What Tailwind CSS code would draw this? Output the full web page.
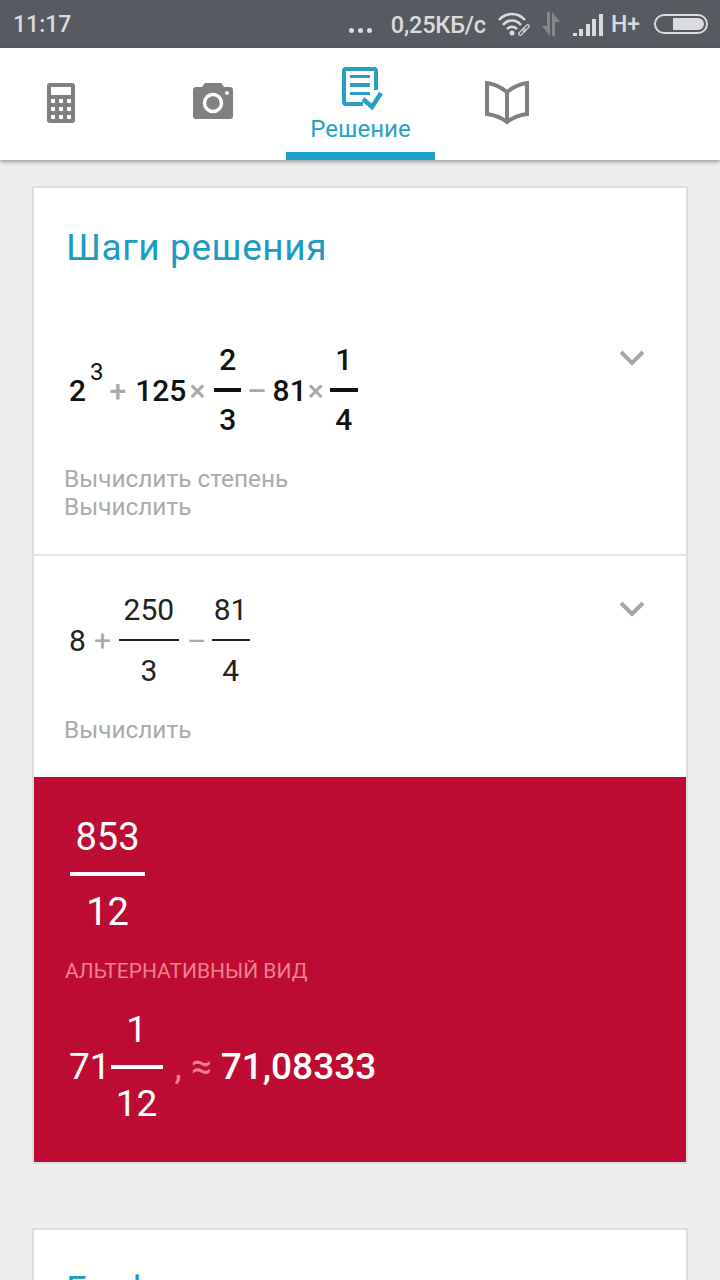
<!DOCTYPE html>
<html lang="en">
<head>
    <meta charset="UTF-8">
    <title>Решение</title>
    <script src="https://cdn.jsdelivr.net/npm/@tailwindcss/browser@4"></script>
</head>
<body class="bg-[#eeeeee] font-['Roboto',sans-serif] w-[720px] h-[1280px] overflow-hidden">
    <!-- Status bar -->
    <div class="h-[48px] bg-[#575a61] flex items-center pl-[13px] pr-[12px] text-[#dadbdd] font-medium">
        <div class="text-[23px] mt-[3px]">11:17</div>
        <div class="ml-auto flex items-center">
            <div class="flex gap-[4px] mr-[19px] mt-[13px]">
                <span class="w-[5px] h-[5px] rounded-full bg-[#dadbdd]"></span>
                <span class="w-[5px] h-[5px] rounded-full bg-[#dadbdd]"></span>
                <span class="w-[5px] h-[5px] rounded-full bg-[#dadbdd]"></span>
            </div>
            <div class="text-[23.5px] tracking-[-0.2px] mr-[12px] mt-[3px]">0,25КБ/с</div>
            <svg width="34" height="24" viewBox="0 0 34 24" fill="none" stroke="#dadbdd" stroke-width="2.6" class="mr-[9px]">
                <path d="M1 8C8 0 20 0 27 8"/><path d="M5 13C10 7 18 7 23 13"/><path d="M9 17C12 14 16 14 19 17"/>
                <circle cx="14" cy="21" r="2.5" fill="#dadbdd" stroke="none"/>
                <rect x="-4" y="-1.5" width="8" height="3" rx="1.5" transform="translate(24 20) rotate(-45)" stroke-width="1.2"/>
                <rect x="-4" y="-1.5" width="8" height="3" rx="1.5" transform="translate(28 16) rotate(-45)" stroke-width="1.2"/>
            </svg>
            <svg width="20" height="26" viewBox="0 0 20 26" fill="#85878c" class="mr-[12px]">
                <path d="M6 1H9V25L1 15H6ZM11 25V1L19 11H14V25Z"/>
            </svg>
            <svg width="30" height="22" viewBox="0 0 30 22" fill="#dadbdd" class="mr-[8px] mt-[2px]">
                <rect x="0" y="19" width="4" height="3"/><rect x="6" y="15" width="4" height="7"/><rect x="13" y="10" width="4" height="12"/><rect x="19" y="5" width="4" height="17"/><rect x="26" y="0" width="4" height="22"/>
            </svg>
            <div class="text-[23px] mr-[14px] mt-[3px]">H+</div>
            <div class="w-[54px] h-[20px] rounded-full border-2 border-[#dadbdd] p-[2px] flex justify-end">
                <div class="w-[31px] h-full rounded-r-full bg-[#dadbdd]"></div>
            </div>
        </div>
    </div>

    <!-- Tabs -->
    <nav class="h-[112px] bg-white shadow-[0_2px_4px_rgba(0,0,0,0.35)] flex relative">
        <div class="w-[122px] flex justify-center pt-[35px]">
            <svg width="28" height="40" viewBox="0 0 28 40"><rect width="28" height="40" rx="3" fill="#808080"/><rect x="4" y="4" width="20" height="8" fill="#fff"/>
                <g fill="#fff"><rect x="4" y="16" width="4" height="4"/><rect x="12" y="16" width="4" height="4"/><rect x="20" y="16" width="4" height="4"/><rect x="4" y="24" width="4" height="4"/><rect x="12" y="24" width="4" height="4"/><rect x="20" y="24" width="4" height="4"/><rect x="4" y="32" width="4" height="4"/><rect x="12" y="32" width="4" height="4"/><rect x="20" y="32" width="4" height="4"/></g></svg>
        </div>
        <div class="ml-[18px] w-[146px] flex justify-center pt-[35px]">
            <svg width="40" height="36" viewBox="0 0 40 36"><path d="M3 4H9L12 0H28L31 4H37Q40 4 40 7V33Q40 36 37 36H3Q0 36 0 33V7Q0 4 3 4Z" fill="#808080"/><circle cx="20" cy="20" r="8.5" fill="none" stroke="#fff" stroke-width="3.5"/><circle cx="34" cy="10" r="2" fill="#fff"/></svg>
        </div>
        <div class="w-[149px] flex flex-col items-center pt-[19px] border-b-[8px] border-[#1ba1c9]">
            <svg width="41" height="43" viewBox="0 0 41 43" class="ml-[4px]"><path d="M21 37H4Q2 37 2 35V4Q2 2 4 2H32Q34 2 34 4V23" fill="none" stroke="#2a9fc4" stroke-width="4"/><path d="M8 8H28V11H8ZM8 16H28V20H8ZM8 25H28V28H8Z" fill="#2a9fc4"/><path d="M21 32L30 40L39 26" fill="none" stroke="#2a9fc4" stroke-width="4.5"/></svg>
            <div class="text-[24px] leading-[26px] text-[#2a9fc4] mt-[6px]">Решение</div>
        </div>
        <div class="w-[143px] flex justify-center pt-[33px]">
            <svg width="44" height="43" viewBox="0 0 44 43" fill="none" stroke="#808080" stroke-width="4"><path d="M22 11C17 7 9 3 2 2V33C9 34 17 37 22 41C27 37 35 34 42 33V2C35 3 27 7 22 11ZM22 11V41"/></svg>
        </div>
    </nav>

    <!-- Steps card -->
    <section class="mt-[26px] mx-[32px] h-[978px] bg-white border-2 border-[#dedede] flex flex-col">
        <h2 class="pl-[32px] pt-[38px] text-[37px] leading-[44px] text-[#1b9cc0] tracking-[0.6px]">Шаги решения</h2>
        <div class="h-[286px] shrink-0 relative border-b-2 border-[#e2e2e2] pl-[35px]">
            <svg class="absolute right-[41px] top-[80px]" width="26" height="16" viewBox="0 0 26 16" fill="none" stroke="#a6a6a6" stroke-width="4"><path d="M2 2L13 13L24 2"/></svg>
            <div class="flex items-center h-[112px] mt-[64px] text-[30px] font-medium text-[#111]">
                <span>2</span><span class="text-[24px] font-normal -mt-[36px] ml-[4px] mr-[6px]">3</span>
                <span class="text-[#a9a9a9] mr-[9px]">+</span><span>125</span><span class="text-[#a9a9a9] ml-[3px] mr-[9px]">×</span>
                <div class="flex flex-col items-center w-[27px]"><span class="leading-[38px] mb-[9px]">2</span><span class="w-full h-[4px] bg-[#111]"></span><span class="leading-[38px] mt-[9px]">3</span></div>
                <span class="text-[#a9a9a9] ml-[6px] mr-[6px]">–</span><span>81</span><span class="text-[#a9a9a9] ml-[1px] mr-[6px]">×</span>
                <div class="flex flex-col items-center w-[28px]"><span class="leading-[38px] mb-[9px]">1</span><span class="w-full h-[4px] bg-[#111]"></span><span class="leading-[38px] mt-[9px]">4</span></div>
            </div>
            <div class="mt-[19px] text-[24.4px] leading-[28px] text-[#ababab] -ml-[5px]">Вычислить степень<br>Вычислить</div>
        </div>
        <div class="h-[221px] shrink-0 relative pl-[35px]">
            <svg class="absolute right-[41px] top-[45px]" width="26" height="16" viewBox="0 0 26 16" fill="none" stroke="#a6a6a6" stroke-width="4"><path d="M2 2L13 13L24 2"/></svg>
            <div class="flex items-center h-[112px] mt-[28px] text-[30px] text-[#222]">
                <span>8</span><span class="text-[#a9a9a9] ml-[8px] mr-[8px]">+</span>
                <div class="flex flex-col items-center w-[60px]"><span class="leading-[36px] mb-[11px]">250</span><span class="w-full h-[2px] bg-[#222]"></span><span class="leading-[36px] mt-[12px]">3</span></div>
                <span class="text-[#a9a9a9] ml-[8px] mr-[5px]">–</span>
                <div class="flex flex-col items-center w-[38px]"><span class="leading-[36px] mb-[11px]">81</span><span class="w-full h-[2px] bg-[#222]"></span><span class="leading-[36px] mt-[12px]">4</span></div>
            </div>
            <div class="mt-[20px] text-[24.4px] leading-[28px] text-[#ababab] -ml-[5px]">Вычислить</div>
        </div>
        <div class="flex-1 bg-[#bc0c34] text-white pl-[31px]">
            <div class="flex flex-col items-center w-[75px] mb-[23px] pt-[37px] ml-[5px]">
                <span class="text-[38px] leading-[46px]">853</span><span class="w-full h-[4px] bg-white mt-[12px]"></span><span class="text-[38px] leading-[46px] mt-[13px]">12</span>
            </div>
            <div class="text-[21px] leading-[26px] text-[#f0808f]">АЛЬТЕРНАТИВНЫЙ ВИД</div>
            <div class="flex items-center mt-[23px] text-[37px] ml-[4px] h-[120px]">
                <span>71</span>
                <div class="flex flex-col items-center w-[52px]"><span class="leading-[46px]">1</span><span class="w-full h-[4px] bg-white mt-[12px]"></span><span class="leading-[46px] mt-[12px]">12</span></div>
                <span class="text-[#f0808f] ml-[12px] mr-[9px]">,</span><span class="text-[#f0808f] mr-[9px]">≈</span><span class="font-medium">71,08333</span>
            </div>
        </div>
    </section>

    <!-- Next card, cut off by the screen -->
    <section class="mt-[64px] mx-[32px] h-[200px] bg-white border-2 border-[#dedede]">
        <h2 class="pl-[32px] pt-[38px] text-[37px] leading-[44px] text-[#1b9cc0]">График</h2>
    </section>
</body>
</html>
